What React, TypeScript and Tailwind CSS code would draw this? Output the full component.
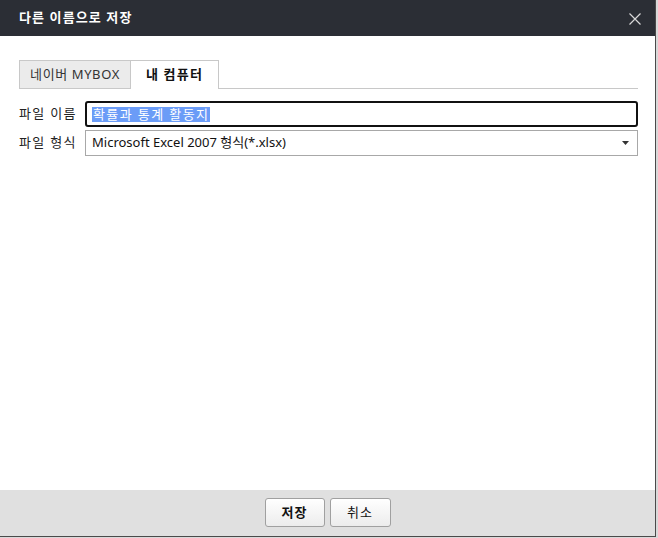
const font = { fontFamily: '"Noto Sans", "Noto Sans CJK KR", sans-serif' };

export default function App() {
  return (
    <div className="w-[658px] h-[538px] bg-[#d9d9d9] overflow-hidden" style={font}>
      <div className="w-[656px] h-[537px] bg-white border-r border-b border-[#4a4a4a] flex flex-col">
        {/* header */}
        <div className="h-[36px] bg-[#2b2e35] flex items-center justify-between pl-[19px] pr-[14px] shrink-0">
          <span className="text-white text-[13px] font-bold tracking-[1.1px]">다른 이름으로 저장</span>
          <svg width="12" height="12" viewBox="0 0 12 12" className="mt-[1px]">
            <path d="M0.5 0.5 L11.5 11.5 M11.5 0.5 L0.5 11.5" stroke="#d8d8d8" strokeWidth="1.2" />
          </svg>
        </div>

        {/* body */}
        <div className="flex-1 pt-[24px] pl-[19px] pr-[17px]">
          <div className="flex border-b border-[#c8c8c8] h-[29px]">
            <div className="w-[112px] h-[29px] bg-[#ebebeb] border border-[#c8c8c8] flex items-center justify-center text-[13px] text-[#333] tracking-[0.6px]">
              네이버 MYBOX
            </div>
            <div className="w-[88px] h-[29px] bg-white border border-l-0 border-b-0 border-[#c8c8c8] flex items-center justify-center text-[13px] font-bold text-[#111] tracking-[1.2px]">
              내 컴퓨터
            </div>
          </div>

          <div className="mt-[12px] flex items-center h-[26px]">
            <span className="w-[66px] text-[13px] text-[#222] shrink-0 tracking-[1.3px]">파일 이름</span>
            <div className="flex-1 h-[26px] border-2 border-[#111] rounded-[3px] flex items-center pl-[5px]">
              <span className="bg-[#6b9cf7] text-white text-[13px] leading-[15px] px-[1px] tracking-[1.4px]">확률과 통계 활동지</span>
            </div>
          </div>

          <div className="mt-[3px] flex items-center h-[26px]">
            <span className="w-[66px] text-[13px] text-[#222] shrink-0 tracking-[1.3px]">파일 형식</span>
            <div className="flex-1 h-[26px] border border-[#a8a8a8] flex items-center justify-between pl-[6px] pr-[8px]">
              <span className="text-[13px] text-[#111]">Microsoft Excel 2007 형식(*.xlsx)</span>
              <svg width="7" height="4" viewBox="0 0 7 4">
                <path d="M0 0 L7 0 L3.5 4 Z" fill="#333" />
              </svg>
            </div>
          </div>
        </div>

        {/* footer */}
        <div className="h-[46px] bg-[#e0e0e0] flex justify-center pt-[8px] gap-[5px] shrink-0">
          <button className="w-[60px] h-[29px] rounded-[3px] border border-[#a0a0a0] bg-gradient-to-b from-white to-[#ececec] text-[13px] font-bold text-[#111] tracking-[1px]">
            저장
          </button>
          <button className="w-[61px] h-[29px] rounded-[3px] border border-[#a0a0a0] bg-gradient-to-b from-white to-[#ececec] text-[13px] text-[#111] tracking-[1px]">
            취소
          </button>
        </div>
      </div>
    </div>
  );
}
